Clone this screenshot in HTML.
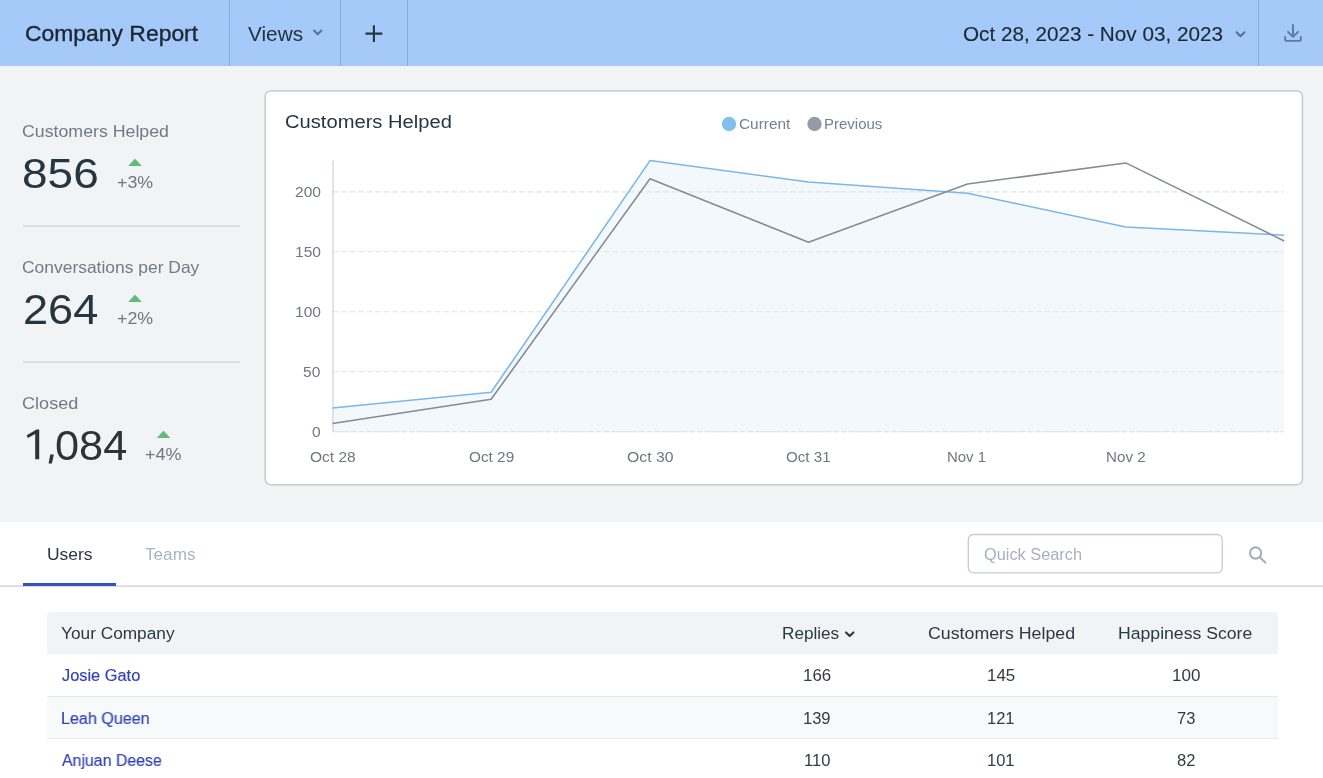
<!DOCTYPE html>
<html>
<head>
<meta charset="utf-8">
<title>Company Report</title>
<style>
*{box-sizing:border-box;margin:0;padding:0}
html,body{width:1323px;height:778px;overflow:hidden}
body{background:#f1f3f5;font-family:"Liberation Sans",sans-serif;color:#253642;position:relative}
.t{position:absolute;white-space:nowrap;line-height:1;transform-origin:0 0;display:block;will-change:transform}
svg{position:absolute;display:block}
#hdr{position:absolute;left:0;top:0;width:1323px;height:66px;background:#a5c9f9}
.vdiv{position:absolute;top:0;width:1px;height:66px;background:#8aabd6}
#lower{position:absolute;left:0;top:522px;width:1323px;height:256px;background:#fff}
#tabul{position:absolute;left:23px;top:583px;width:93px;height:3px;background:#3552be}
#thead{position:absolute;left:47px;top:612px;width:1231px;height:42px;background:#f1f3f5;border-radius:4px 4px 0 0}
.row{position:absolute;left:47px;width:1231px}
</style>
</head>
<body>
<div id="hdr">
  <div class="vdiv" style="left:229px"></div>
  <div class="vdiv" style="left:340px"></div>
  <div class="vdiv" style="left:407px"></div>
  <div class="vdiv" style="left:1258px"></div>
  <svg style="left:0;top:0" width="1323" height="66" viewBox="0 0 1323 66" fill="none">
    <path d="M314 30.5 L317.7 34.2 L321.4 30.5" stroke="#587192" stroke-width="2.1" stroke-linecap="round" stroke-linejoin="round"/>
    <path d="M365.5 33.6 H382.3 M373.9 25.2 V42" stroke="#253642" stroke-width="2.1"/>
    <path d="M1236.6 32.3 L1240.5 36.2 L1244.4 32.3" stroke="#587192" stroke-width="2.1" stroke-linecap="round" stroke-linejoin="round"/>
    <g stroke="#5f7a9e" stroke-width="1.9" stroke-linecap="round" stroke-linejoin="round">
      <path d="M1293 25 V36.3 M1288 31.8 L1293 36.8 L1298 31.8"/>
      <path d="M1285.1 37 V38.9 a2 2 0 0 0 2 2 H1298.9 a2 2 0 0 0 2 -2 V37"/>
    </g>
  </svg>
</div>

<svg style="left:0;top:150px" width="260" height="330" viewBox="0 150 260 330">
  <rect x="22.8" y="225.45" width="217.2" height="1.5" fill="#d4d8dd"/>
  <rect x="22.8" y="361.45" width="217.2" height="1.5" fill="#d4d8dd"/>
  <path d="M128.2 165.9 L134.4 159.2 Q135 158.6 135.6 159.2 L141.8 165.9 Z" fill="#61bb7d"/>
  <path d="M128.2 301.9 L134.4 295.2 Q135 294.6 135.6 295.2 L141.8 301.9 Z" fill="#61bb7d"/>
  <path d="M156.7 437.9 L162.9 431.2 Q163.5 430.6 164.1 431.2 L170.3 437.9 Z" fill="#61bb7d"/>
  <path d="M39.2 429.6 V459.2 H35.2 V434.1 L27.8 438 L26.7 435.2 L36.6 429.6 Z" fill="#2f3338"/>
  <path d="M50.3 454.5 H53.8 L51.9 463.4 H48.6 Z" fill="#2f3338"/>
</svg>

<svg style="left:255px;top:82px" width="1060" height="414" viewBox="255 82 1060 414"><rect x="265.15" y="91.7" width="1037.3" height="393.6" rx="5.5" fill="#000" opacity="0.035"/><rect x="265.15" y="90.95" width="1037.3" height="393.75" rx="5.5" ry="5.5" fill="#fff" stroke="#c6cad1" stroke-width="1.5"/></svg>
<svg style="left:0;top:66px" width="1323" height="456" viewBox="0 66 1323 456">
  <path d="M332.5 408 L491.1 392.3 L650 160.6 L808.5 182 L967.5 193.2 L1125.8 226.9 L1284.2 235.2 L1284.2 431.5 L332.5 431.5 Z" fill="#f3f8fd"/>
  <g stroke="#dee3e9" stroke-width="1.1" stroke-dasharray="5.6 2.87">
    <path d="M333 191.9 H1284"/>
    <path d="M333 251.7 H1284"/>
    <path d="M333 311.7 H1284"/>
    <path d="M333 371.7 H1284"/>
    <path d="M333 431.7 H1284"/>
  </g>
  <path d="M333 431.7 H1284" stroke="#dde1e6" stroke-width="1.1" stroke-dasharray="4.8 2.4" stroke-dashoffset="3"/>
  <path d="M333 160.5 V432" stroke="#c9d1dc" stroke-width="1.2"/>
  <path d="M332.5 408 L491.1 392.3 L650 160.6 L808.5 182 L967.5 193.2 L1125.8 226.9 L1284.2 235.2" fill="none" stroke="#7ab7e7" stroke-width="1.55" stroke-linejoin="round"/>
  <path d="M332.5 423.4 L491.1 399.3 L650 178.7 L808.5 242.3 L967.5 184.1 L1125.8 162.9 L1284.2 241" fill="none" stroke="#868b93" stroke-width="1.55" stroke-linejoin="round"/>
  <circle cx="729" cy="124" r="7.2" fill="#7fc0ef"/>
  <circle cx="814.5" cy="124" r="7.2" fill="#959ca8"/>
</svg>

<div id="lower"></div>
<svg style="left:0;top:580px" width="1323" height="10" viewBox="0 580 1323 10"><rect x="0" y="585.3" width="1323" height="1.7" fill="#d6dae0"/></svg>
<div id="tabul"></div>
<svg style="left:960px;top:528px" width="270" height="52" viewBox="960 528 270 52"><rect x="968.3" y="534.5" width="253.9" height="38.3" rx="5" ry="5" fill="#fff" stroke="#c6ccd5" stroke-width="1.3"/></svg>
<svg style="left:1243px;top:541px" width="28" height="28" viewBox="1243 541 28 28" fill="none" stroke="#a3afbc" stroke-width="2.1" stroke-linecap="round">
  <circle cx="1255.6" cy="553" r="5.6"/><path d="M1260 557.4 L1265.3 562.6"/>
</svg>

<div id="thead"></div>
<div class="row" style="top:654px;height:42px;background:#fff"></div>
<div class="row" style="top:696px;height:43px;background:#f8f9fa;border-top:1px solid #e6eaee"></div>
<div class="row" style="top:738px;height:40px;background:#fff;border-top:1px solid #e6eaee"></div>
<svg style="left:840px;top:626px" width="20" height="16" viewBox="840 626 20 16" fill="none"><path d="M846 632.4 L849.7 636.1 L853.4 632.4" stroke="#2b3a49" stroke-width="2.1" stroke-linecap="round" stroke-linejoin="round"/></svg>

<div class="t" id="t_title" style="left:24.82px;top:22.58px;font-size:21.6px;color:#1b2733;transform:scaleX(1.0605);-webkit-text-stroke:0.35px #1b2733">Company Report</div>
<div class="t" id="t_views" style="left:248.16px;top:23.73px;font-size:20.5px;color:#25323e;transform:scaleX(1.0138)">Views</div>
<div class="t" id="t_date" style="left:963.04px;top:23.55px;font-size:20.5px;color:#1d2a36;transform:scaleX(1.0093);-webkit-text-stroke:0.15px #1d2a36">Oct 28, 2023 - Nov 03, 2023</div>
<div class="t" id="s1l" style="left:22.49px;top:123.23px;font-size:16.5px;color:#707b88;transform:scaleX(1.0757)">Customers Helped</div>
<div class="t" id="s1v" style="left:21.65px;top:151.68px;font-size:43px;color:#253642;transform:scaleX(1.0698)">856</div>
<div class="t" id="s1p" style="left:116.96px;top:174.54px;font-size:16px;color:#707783;transform:scaleX(1.1119)">+3%</div>
<div class="t" id="s2l" style="left:22.27px;top:259.23px;font-size:16.5px;color:#707b88;transform:scaleX(1.0564)">Conversations per Day</div>
<div class="t" id="s2v" style="left:22.59px;top:287.68px;font-size:43px;color:#253642;transform:scaleX(1.0503)">264</div>
<div class="t" id="s2p" style="left:116.96px;top:310.54px;font-size:16px;color:#707783;transform:scaleX(1.1119)">+2%</div>
<div class="t" id="s3l" style="left:22.11px;top:395.23px;font-size:16.5px;color:#707b88;transform:scaleX(1.0970)">Closed</div>
<div class="t" id="s3v" style="left:55.16px;top:423.62px;font-size:43px;color:#2e3338;transform:scaleX(1.0068)">084</div>
<div class="t" id="s3p" style="left:145.22px;top:447.16px;font-size:16px;color:#707783;transform:scaleX(1.1217)">+4%</div>
<div class="t" id="c_title" style="left:285.43px;top:112.97px;font-size:18.7px;color:#253642;transform:scaleX(1.0785)">Customers Helped</div>
<div class="t" id="lg1" style="left:738.97px;top:116.73px;font-size:14.5px;color:#75828f;transform:scaleX(1.0624)">Current</div>
<div class="t" id="lg2" style="left:823.91px;top:116.73px;font-size:14.5px;color:#75828f;transform:scaleX(1.0348)">Previous</div>
<div class="t" id="y200" style="left:294.88px;top:184.56px;font-size:14.7px;color:#6f7780;transform:scaleX(1.0607)">200</div>
<div class="t" id="y150" style="left:294.77px;top:244.56px;font-size:14.7px;color:#6f7780;transform:scaleX(1.0600)">150</div>
<div class="t" id="y100" style="left:294.77px;top:304.56px;font-size:14.7px;color:#6f7780;transform:scaleX(1.0600)">100</div>
<div class="t" id="y50" style="left:303.18px;top:364.56px;font-size:14.7px;color:#6f7780;transform:scaleX(1.0600)">50</div>
<div class="t" id="y0" style="left:312.26px;top:424.76px;font-size:14.7px;color:#6f7780;transform:scaleX(1.0600)">0</div>
<div class="t" id="x0" style="left:310.00px;top:449.67px;font-size:14.8px;color:#6f7780;transform:scaleX(1.0497)">Oct 28</div>
<div class="t" id="x1" style="left:468.99px;top:449.67px;font-size:14.8px;color:#6f7780;transform:scaleX(1.0360)">Oct 29</div>
<div class="t" id="x2" style="left:627.10px;top:449.67px;font-size:14.8px;color:#6f7780;transform:scaleX(1.0649)">Oct 30</div>
<div class="t" id="x3" style="left:786.19px;top:449.67px;font-size:14.8px;color:#6f7780;transform:scaleX(1.0226)">Oct 31</div>
<div class="t" id="x4" style="left:946.86px;top:449.67px;font-size:14.8px;color:#6f7780;transform:scaleX(1.0087)">Nov 1</div>
<div class="t" id="x5" style="left:1105.90px;top:449.67px;font-size:14.8px;color:#6f7780;transform:scaleX(1.0248)">Nov 2</div>
<div class="t" id="tab1" style="left:46.64px;top:547.26px;font-size:16px;color:#2a3540;transform:scaleX(1.0905)">Users</div>
<div class="t" id="tab2" style="left:144.71px;top:547.26px;font-size:16px;color:#a9b4c0;transform:scaleX(1.0716)">Teams</div>
<div class="t" id="qs" style="left:984.23px;top:547.08px;font-size:16px;color:#a8b0bd;transform:scaleX(1.0202)">Quick Search</div>
<div class="t" id="h0" style="left:61.03px;top:625.00px;font-size:16.3px;color:#2b3845;transform:scaleX(1.0602)">Your Company</div>
<div class="t" id="h1" style="left:782.32px;top:625.00px;font-size:16.3px;color:#2b3845;transform:scaleX(1.0526)">Replies</div>
<div class="t" id="h2" style="left:927.78px;top:625.00px;font-size:16.3px;color:#2b3845;transform:scaleX(1.0904)">Customers Helped</div>
<div class="t" id="h3" style="left:1118.47px;top:625.00px;font-size:16.3px;color:#2b3845;transform:scaleX(1.0828)">Happiness Score</div>
<div class="t" id="r1n" style="left:61.62px;top:666.70px;font-size:16.3px;color:#3444b4;transform:scaleX(1.0055);-webkit-text-stroke:0.2px #3444b4">Josie Gato</div>
<div class="t" id="r1a" style="left:803.10px;top:666.83px;font-size:16.2px;color:#343b45;transform:scaleX(1.0438)">166</div>
<div class="t" id="r1b" style="left:987.23px;top:666.83px;font-size:16.2px;color:#343b45;transform:scaleX(1.0475)">145</div>
<div class="t" id="r1c" style="left:1171.77px;top:666.83px;font-size:16.2px;color:#343b45;transform:scaleX(1.0529)">100</div>
<div class="t" id="r2n" style="left:60.67px;top:709.80px;font-size:16.3px;color:#3444b4;transform:scaleX(0.9893);-webkit-text-stroke:0.2px #3444b4">Leah Queen</div>
<div class="t" id="r2a" style="left:803.16px;top:709.83px;font-size:16.2px;color:#343b45;transform:scaleX(1.0200)">139</div>
<div class="t" id="r2b" style="left:987.46px;top:709.83px;font-size:16.2px;color:#343b45;transform:scaleX(1.0200)">121</div>
<div class="t" id="r2c" style="left:1177.07px;top:709.83px;font-size:16.2px;color:#343b45;transform:scaleX(1.0200)">73</div>
<div class="t" id="r3n" style="left:61.53px;top:752.40px;font-size:16.3px;color:#3444b4;transform:scaleX(0.9754);-webkit-text-stroke:0.2px #3444b4">Anjuan Deese</div>
<div class="t" id="r3a" style="left:803.76px;top:752.18px;font-size:16.2px;color:#343b45;transform:scaleX(1.0200)">110</div>
<div class="t" id="r3b" style="left:987.46px;top:752.18px;font-size:16.2px;color:#343b45;transform:scaleX(1.0200)">101</div>
<div class="t" id="r3c" style="left:1177.07px;top:752.18px;font-size:16.2px;color:#343b45;transform:scaleX(1.0200)">82</div>
</body>
</html>
